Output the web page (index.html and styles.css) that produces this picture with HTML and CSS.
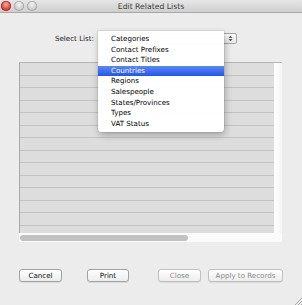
FILE: index.html
```html
<!DOCTYPE html>
<html lang="en">
<head>
  <meta charset="UTF-8" />
  <title>Edit Related Lists</title>
  <link rel="stylesheet" href="styles.css">
</head>
<body>
  <div class="window">
    <div class="titlebar">
      <div class="lights">
        <span class="light close"></span>
        <span class="light"></span>
        <span class="light"></span>
      </div>
      <div class="title">Edit Related Lists</div>
      <div></div>
    </div>

    <div class="select-row">
      <label class="select-label">Select List:</label>
      <div class="popup">
        <svg class="stepper" width="5" height="7" viewBox="0 0 5 7">
          <path d="M0.5 3 L2.5 0.8 L4.5 3 Z M0.5 4 L2.5 6.2 L4.5 4 Z" fill="#555"/>
        </svg>
      </div>
    </div>

    <div class="scroll-view">
      <div class="table">
        <div class="row"></div><div class="row"></div><div class="row"></div>
        <div class="row"></div><div class="row"></div><div class="row"></div>
        <div class="row"></div><div class="row"></div><div class="row"></div>
        <div class="row"></div><div class="row"></div><div class="row"></div>
        <div class="row"></div><div class="row"></div>
      </div>
      <div class="vscroll"></div>
      <div class="hscroll"><div class="thumb"></div></div>
      <div class="corner"></div>
    </div>

    <div class="buttons">
      <button class="btn btn-cancel">Cancel</button>
      <button class="btn btn-print">Print</button>
      <button class="btn btn-close" disabled>Close</button>
      <button class="btn btn-apply" disabled>Apply to Records</button>
    </div>

    <ul class="menu">
      <li>Categories</li>
      <li>Contact Prefixes</li>
      <li>Contact Titles</li>
      <li class="active">Countries</li>
      <li>Regions</li>
      <li>Salespeople</li>
      <li>States/Provinces</li>
      <li>Types</li>
      <li>VAT Status</li>
    </ul>

    <svg class="grip" width="8" height="8" viewBox="0 0 8 8">
      <path d="M8 1 L1 8 M8 4 L4 8 M8 7 L7 8" stroke="#9a9a9a" stroke-width="0.8"/>
    </svg>
  </div>
</body>
</html>
```

FILE: styles.css
```css
body {
  margin: 0;
  padding: 0;
  background: #ececec;
  font-family: "DejaVu Sans", sans-serif;
  font-size: 7.1px;
  color: #111;
}

.window {
  position: relative;
  width: 302px;
  height: 305px;
  overflow: hidden;
}

.titlebar {
  display: grid;
  grid-template-columns: 1fr auto 1fr;
  align-items: center;
  height: 12px;
  background: linear-gradient(#e6e6e6, #cfcfcf);
  border-bottom: 1px solid #a8a8a8;
}

.lights {
  display: flex;
  gap: 3px;
  padding-left: 1px;
}

.light {
  width: 10px;
  height: 10px;
  border-radius: 50%;
  background: radial-gradient(circle at 50% 35%, #f4f4f4, #c4c4c4 70%);
  box-shadow: inset 0 0 0 0.6px #9d9d9d;
}

.light.close {
  background: radial-gradient(circle at 50% 35%, #ffb0a8, #e0443a 55%, #b8231a);
  box-shadow: inset 0 0 0 0.6px #9a2a22;
}

.title {
  font-size: 7.7px;
  color: #3a3a3a;
}

.select-row {
  display: flex;
  align-items: center;
  height: 10px;
  margin-top: 20px;
  padding-left: 55px;
}

.select-label {
  width: 43px;
  color: #222;
}

.popup {
  display: flex;
  justify-content: flex-end;
  align-items: center;
  width: 137px;
  height: 9px;
  background: linear-gradient(#fdfdfd, #e8e8e8);
  border: 0.6px solid #a6a6a6;
  border-radius: 2px;
}

.stepper {
  margin-right: 3px;
}

.scroll-view {
  display: grid;
  grid-template-columns: 255px 8px;
  grid-template-rows: 171px 9px;
  width: 263px;
  margin: 19px 0 0 19px;
}

.table {
  background: #dddddd;
  border-top: 1px solid #b4b4b4;
  border-left: 1px solid #a9a9a9;
  overflow: hidden;
}

.row {
  box-sizing: border-box;
  height: 12.5px;
  border-bottom: 1px solid #c3c3c3;
}

.vscroll {
  background: linear-gradient(90deg, #ffffff, #f4f4f4);
  border-top: 1px solid #b4b4b4;
}

.hscroll {
  display: flex;
  align-items: center;
  background: #fbfbfb;
  padding-left: 1px;
}

.thumb {
  width: 168px;
  height: 6px;
  border-radius: 3px;
  background: #c2c2c2;
}

.corner {
  background: #fbfbfb;
}

.buttons {
  display: flex;
  margin-top: 27px;
  padding-left: 19px;
}

.btn {
  height: 13px;
  padding: 0;
  font-family: "DejaVu Sans", sans-serif;
  font-size: 7.1px;
  color: #111;
  background: linear-gradient(#ffffff, #ececec);
  border: 0.7px solid #a3a3a3;
  border-radius: 3px;
  box-shadow: 0 0.5px 0.5px rgba(0, 0, 0, 0.15);
}

.btn:disabled {
  color: #8a8a8a;
  border-color: #c0c0c0;
}

.btn-cancel { width: 43px; }
.btn-print { width: 42px; margin-left: 25px; }
.btn-close { width: 43px; margin-left: 29px; }
.btn-apply { width: 75px; margin-left: 7px; }

.menu {
  position: absolute;
  left: 98px;
  top: 31px;
  width: 126px;
  margin: 0;
  padding: 3px 0;
  list-style: none;
  background: rgba(255, 255, 255, 0.98);
  border-radius: 0 0 4px 4px;
  box-shadow: 1px 3px 7px rgba(0, 0, 0, 0.28), 0 0 0 0.5px rgba(0, 0, 0, 0.12);
}

.menu li {
  height: 10.6px;
  line-height: 10.6px;
  padding-left: 13px;
  color: #000;
}

.menu li.active {
  background: linear-gradient(#5c87f3, #2156ee);
  color: #fff;
}

.grip {
  position: absolute;
  right: 0;
  bottom: 0;
}
```
